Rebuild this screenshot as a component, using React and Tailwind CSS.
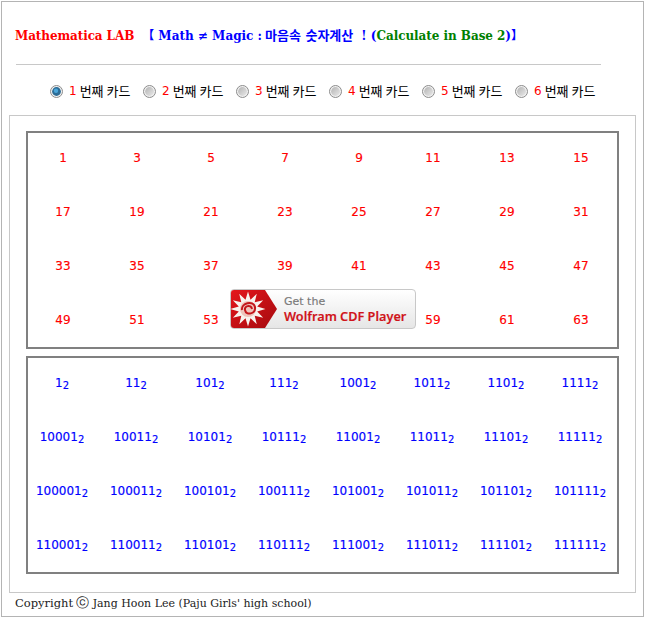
const cards = [1, 2, 3, 4, 5, 6];
const odds = Array.from({ length: 32 }, (_, i) => i * 2 + 1);

// star outline of the CDF logo, 12 spikes
const starPoints = Array.from({ length: 24 }, (_, i) => {
  const r = i % 2 === 0 ? 17.5 : 9.5;
  const a = (i * Math.PI) / 12 - Math.PI / 2;
  return `${(17 + r * Math.cos(a)).toFixed(1)},${(19 + r * Math.sin(a)).toFixed(1)}`;
}).join(" ");

function Radio({ checked }) {
  return (
    <svg width="13" height="13" viewBox="0 0 13 13" className="shrink-0">
      <defs>
        <linearGradient id="radioBg" x1="0" y1="0" x2="1" y2="1">
          <stop offset="0" stopColor="#b4b4b4" />
          <stop offset="1" stopColor="#e8e8e8" />
        </linearGradient>
      </defs>
      <circle cx="6.5" cy="6.5" r="6" fill="#f0f0f0" stroke="#8c8c8c" />
      <circle cx="6.5" cy="6.5" r="4.4" fill={checked ? "#2c6c96" : "url(#radioBg)"} />
      {checked && <circle cx="6" cy="5.8" r="2.2" fill="#4aa6da" />}
    </svg>
  );
}

function CdfBadge() {
  return (
    <div className="absolute left-[202px] top-[156px] w-[186px] h-[40px] flex items-center rounded-[4px] border border-[#c8c8c8] bg-gradient-to-b from-white to-[#e6e6e6] overflow-hidden">
      <svg width="50" height="38" viewBox="0 0 50 38" className="shrink-0">
        <defs>
          <linearGradient id="red" x1="0" y1="0" x2="1" y2="1">
            <stop offset="0" stopColor="#e4161c" />
            <stop offset="1" stopColor="#a50a0e" />
          </linearGradient>
        </defs>
        <path d="M0 0H34L46 19L34 38H0Z" fill="url(#red)" />
        <polygon points={starPoints} fill="#f8f3ee" />
        <circle cx="17" cy="19" r="8" fill="#eec4bb" />
        <path d="M11 20C10 13 22 10 24 17C25 24 15 26 14 20C13 16 20 14 21 19" fill="none" stroke="#c3161b" strokeWidth="2" />
      </svg>
      <div className="ml-[3px] flex flex-col">
        <span className="font-['DejaVu_Sans',sans-serif] text-[11px] leading-[13px] text-[#7a7a7a]">Get the</span>
        <span className="font-['Noto_Sans',sans-serif] text-[12.7px] leading-[16px] font-semibold text-[#d0141a] whitespace-nowrap">Wolfram CDF Player</span>
      </div>
    </div>
  );
}

function Card({ children, className }) {
  return (
    <div className={`relative w-[593px] h-[218px] border-2 border-[#808080] ${className}`}>
      <div className="grid grid-cols-[repeat(8,66px)] auto-rows-[46px] gap-x-2 gap-y-2 pl-px pt-[2px] font-['DejaVu_Sans',sans-serif] text-[12px] [-webkit-text-stroke:0.15px]">
        {children}
      </div>
    </div>
  );
}

export default function App() {
  return (
    <div className="w-[645px] h-[619px] bg-white pt-px pl-px">
      <div className="w-[643px] h-[616px] border border-[#b4b4b4] font-['DejaVu_Serif','Noto_Sans_CJK_KR',serif]">
        <div className="flex h-[62px] pl-[13px] pt-[26px] font-bold text-[12px] leading-[16px] whitespace-nowrap">
          <span className="text-[#ff0000] tracking-[-0.1px]">Mathematica LAB</span>
          <span className="text-[#0000ff] ml-[8px]">【 Math ≠ Magic : </span>
          <span className="text-[#0000ff] ml-[3px] text-[13px]">마음속 숫자계산</span>
          <span className="text-[#0000ff] ml-[8px]">! (</span>
          <span className="text-[#008000] tracking-[-0.05px]">Calculate in Base 2</span>
          <span className="text-[#0000ff]">)】</span>
        </div>
        <div className="ml-[14px] w-[585px] h-px bg-[#c8c8c8]" />
        <div className="flex pl-[48px] pt-[18px] h-[50px] font-['Noto_Sans_CJK_KR',sans-serif] text-[13px] leading-[16px]">
          {cards.map((n) => (
            <label key={n} className="flex w-[93px] h-[16px] items-center whitespace-nowrap">
              <Radio checked={n === 1} />
              <span className="ml-[6px] text-[#ff0000] font-['DejaVu_Sans',sans-serif] text-[12px]">{n}</span>
              <span className="ml-[3px] text-black">번째 카드</span>
            </label>
          ))}
        </div>
        <div className="ml-[7px] w-[627px] h-[478px] border border-[#c8c8c8] pl-4 pt-[15px]">
          <Card>
            {odds.map((n) => (
              <div key={n} className="flex items-center justify-center pl-[2px] text-[#ff0000]">{n}</div>
            ))}
            <CdfBadge />
          </Card>
          <Card className="mt-[7px]">
            {odds.map((n) => (
              <div key={n} className="flex items-center justify-center text-[#0000ff] whitespace-nowrap">
                {n.toString(2)}
                <sub className="text-[10px]">2</sub>
              </div>
            ))}
          </Card>
        </div>
        <div className="pl-[13px] pt-[2px] text-[11px] leading-[16px] text-[#222] whitespace-nowrap">
          <span className="text-[11.5px]">Copyright</span>
          <span className="ml-[3px] font-['DejaVu_Sans',sans-serif] text-[13px] leading-[14px]">ⓒ</span> Jang Hoon Lee (Paju Girls' high school)
        </div>
      </div>
    </div>
  );
}
